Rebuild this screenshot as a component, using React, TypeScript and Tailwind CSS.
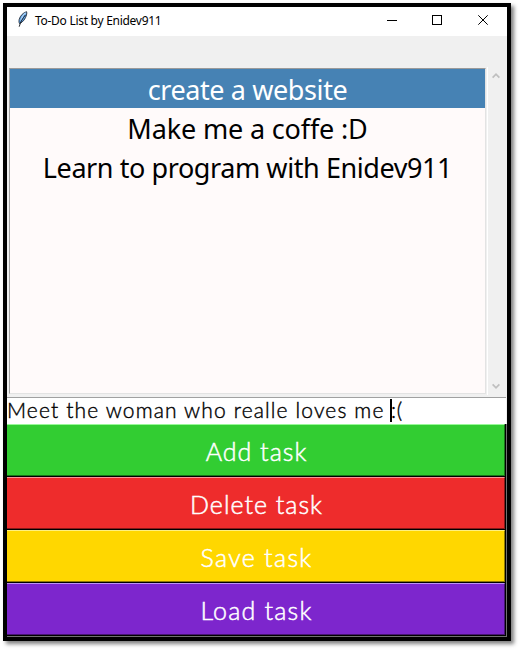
import React from "react";

const tasks = [
  { text: "create a website", style: "bg-[#4682b4] text-white", tracking: "tracking-[-0.4px]" },
  { text: "Make me a coffe :D", style: "text-black", tracking: "tracking-[-0.15px]" },
  { text: "Learn to program with Enidev911", style: "text-black", tracking: "tracking-[-0.42px]" },
];

const actions = [
  { text: "Add task", box: "bg-[#32cd32] border-t-[#98f998] border-b-[#197519] border-r-[#197519]", tracking: "tracking-[1px]" },
  { text: "Delete task", box: "bg-[#ee2c2c] border-t-[#f69696] border-b-[#861919] border-r-[#861919]", tracking: "tracking-[1px]" },
  { text: "Save task", box: "bg-[#ffd700] border-t-[#fff080] border-b-[#8f7900] border-r-[#8f7900]", tracking: "tracking-[1.3px]" },
  { text: "Load task", box: "bg-[#7d26cd] border-t-[#be93f0] border-b-[#461573] border-r-[#461573]", tracking: "tracking-[1.2px]" },
];

function Feather() {
  return (
    <svg width="12" height="17" viewBox="0 0 12 17" className="ml-[10px] mt-[4px] shrink-0">
      <path d="M9.6.7C6.5 1.4 3.2 4.6 2.2 8.4c-.4 1.7-.3 3 .3 4.2 3.7-1.5 6-5 7-8.6.4-1.5.4-2.5.1-3.3z" fill="#5b9fe4" stroke="#27303b" strokeWidth=".9" />
      <path d="M8.7 1.8C6.7 3.3 4.7 6.2 3.8 9.7" fill="none" stroke="#a8d0f5" strokeWidth="1.2" />
      <path d="M8.4 4C6 7 3.5 10.5 2.2 15.7" fill="none" stroke="#101318" strokeWidth=".9" />
    </svg>
  );
}

function TitleBar() {
  return (
    <div className="flex h-[29px] bg-white">
      <Feather />
      <div className="ml-[6px] pt-[5px] font-['Noto_Sans',sans-serif] text-[12px] leading-[17px] tracking-[-0.28px] whitespace-nowrap text-black">
        To-Do List by Enidev911
      </div>
      <svg width="102" height="11" viewBox="0 0 102 11" className="mt-[8px] mr-[18px] ml-auto shrink-0" fill="none" stroke="black">
        <path d="M0 5.5h10M45.5.5h9v9h-9z" shapeRendering="crispEdges" />
        <path d="M91.3.3l9.4 9.4M100.7.3l-9.4 9.4" />
      </svg>
    </div>
  );
}

function ScrollBar() {
  return (
    <div className="flex h-[328px] w-[20px] flex-col items-center justify-between border-l border-white bg-[#f0f0f0] py-[5px] pr-[4px]">
      <svg width="8" height="8" viewBox="0 0 8 8" fill="none" stroke="#bfbfbf" strokeWidth="1.8"><path d="M.6 5.6L4 2.2l3.4 3.4" /></svg>
      <svg width="8" height="8" viewBox="0 0 8 8" fill="none" stroke="#bfbfbf" strokeWidth="1.8"><path d="M.6 2.4L4 5.8l3.4-3.4" /></svg>
    </div>
  );
}

export default function App() {
  return (
    <div className="h-[650px] w-[520px] overflow-hidden bg-white pt-[3px] pl-[3px]">
      <div className="h-[638px] w-[508px] border-4 border-black bg-[#f0f0f0] shadow-[3px_3px_4px_rgba(0,0,0,0.5)]">
        <TitleBar />
        <div className="flex h-[361px] pt-[31px] pl-[2px]">
          <div className="mt-px h-[326px] w-[477px] border border-t-[#9a9a9a] border-r-[#e3e3e3] border-b-[#e3e3e3] border-l-[#a0a0a0] bg-[#fffafa]">
            {tasks.map((t) => (
              <div key={t.text} className={`h-[39px] text-center font-['Noto_Sans',sans-serif] text-[27px] leading-[41px] whitespace-nowrap ${t.style}`}>
                <span className={t.tracking}>{t.text}</span>
              </div>
            ))}
          </div>
          <div className="ml-px"><ScrollBar /></div>
        </div>
        <div className="flex h-[27px] w-[499px] items-start border-t border-[#a0a0a0] bg-white font-['Century_Gothic','URW_Gothic',Lato,sans-serif] text-[21px] leading-[24px] font-light whitespace-nowrap text-black [-webkit-text-stroke:0.4px_black]">
          <span className="w-[383px] tracking-[1.14px] whitespace-pre">Meet the woman who realle loves me </span>
          <span className="mt-px h-[23px] w-[2px] shrink-0 bg-black" />
          <span className="-ml-px tracking-[0.8px]">:(</span>
        </div>
        <div className="h-[213px] border-r border-b border-[#707070] bg-black">
          {actions.map((a) => (
            <div key={a.text} className="h-[53px] pr-px pb-px">
              <button className={`block h-[52px] w-full border-t border-r border-b pl-[2px] font-['Century_Gothic','URW_Gothic',Lato,sans-serif] text-[25px] leading-[53px] font-light text-white [-webkit-text-stroke:0.5px_white] ${a.box}`}>
                <span className={a.tracking}>{a.text}</span>
              </button>
            </div>
          ))}
        </div>
      </div>
    </div>
  );
}
